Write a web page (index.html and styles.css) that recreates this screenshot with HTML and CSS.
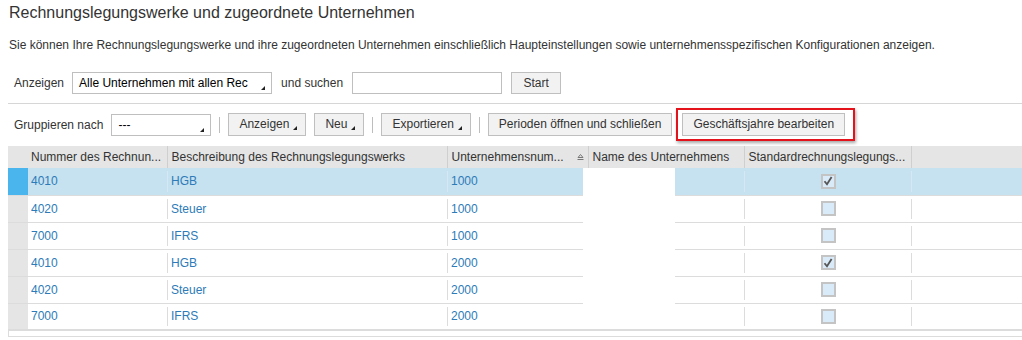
FILE: index.html
```html
<!DOCTYPE html>
<html lang="de">
<head>
<meta charset="utf-8">
<title>Rechnungslegungswerke</title>
<link rel="stylesheet" href="styles.css">
</head>
<body>
<div class="page">
  <h1 class="title">Rechnungslegungswerke und zugeordnete Unternehmen</h1>
  <p class="desc">Sie können Ihre Rechnungslegungswerke und ihre zugeordneten Unternehmen einschließlich Haupteinstellungen sowie unternehmensspezifischen Konfigurationen anzeigen.</p>

  <div class="filterbar">
    <span class="lbl">Anzeigen</span>
    <div class="select sel-wide"><span class="sel-text">Alle Unternehmen mit allen Rec</span><span class="corner"></span></div>
    <span class="lbl">und suchen</span>
    <div class="input"></div>
    <button class="btn btn-start">Start</button>
  </div>

  <div class="toolbar">
    <span class="lbl">Gruppieren nach</span>
    <div class="select sel-group"><span class="sel-text">---</span><span class="corner"></span></div>
    <span class="sep"></span>
    <button class="btn btn-menu">Anzeigen<span class="corner"></span></button>
    <button class="btn btn-menu">Neu<span class="corner"></span></button>
    <span class="sep"></span>
    <button class="btn btn-menu">Exportieren<span class="corner"></span></button>
    <span class="sep"></span>
    <button class="btn">Perioden öffnen und schließen</button>
    <button class="btn btn-marked">Geschäftsjahre bearbeiten</button>
  </div>

  <div class="grid">
    <table class="tbl">
      <colgroup>
        <col class="c-sel"><col class="c1"><col class="c2"><col class="c3"><col class="c4"><col class="c5"><col>
      </colgroup>
      <thead>
        <tr>
          <th class="selcell"></th>
          <th>Nummer des Rechnun...</th>
          <th>Beschreibung des Rechnungslegungswerks</th>
          <th class="sorted">Unternehmensnum...<svg class="sort" width="7" height="6" viewBox="0 0 7 6"><path d="M3.5 0.5 L6 3.5 H1 Z" fill="none" stroke="#777" stroke-width="1"/><path d="M0.5 5.5 H6.5" stroke="#777" stroke-width="1"/></svg></th>
          <th>Name des Unternehmens</th>
          <th>Standardrechnungslegungs...</th>
          <th></th>
        </tr>
      </thead>
      <tbody>
        <tr class="selected">
          <td class="selcell"></td><td>4010</td><td>HGB</td><td>1000</td><td></td>
          <td class="chk"><span class="box"><svg width="10" height="10" viewBox="0 0 10 10"><path d="M1.5 5.2 L4 8.3 L8.6 1" fill="none" stroke="#555" stroke-width="1.8"/></svg></span></td><td></td>
        </tr>
        <tr>
          <td class="selcell"></td><td>4020</td><td>Steuer</td><td>1000</td><td></td>
          <td class="chk"><span class="box"></span></td><td></td>
        </tr>
        <tr>
          <td class="selcell"></td><td>7000</td><td>IFRS</td><td>1000</td><td></td>
          <td class="chk"><span class="box"></span></td><td></td>
        </tr>
        <tr>
          <td class="selcell"></td><td>4010</td><td>HGB</td><td>2000</td><td></td>
          <td class="chk"><span class="box"><svg width="10" height="10" viewBox="0 0 10 10"><path d="M1.5 5.2 L4 8.3 L8.6 1" fill="none" stroke="#555" stroke-width="1.8"/></svg></span></td><td></td>
        </tr>
        <tr>
          <td class="selcell"></td><td>4020</td><td>Steuer</td><td>2000</td><td></td>
          <td class="chk"><span class="box"></span></td><td></td>
        </tr>
        <tr>
          <td class="selcell"></td><td>7000</td><td>IFRS</td><td>2000</td><td></td>
          <td class="chk"><span class="box"></span></td><td></td>
        </tr>
      </tbody>
    </table>
    <div class="blank"></div>
    <div class="grid-foot"></div>
  </div>
</div>
</body>
</html>
```

FILE: styles.css
```css
* { box-sizing: border-box; }
html, body { margin: 0; padding: 0; background: #fff; }
body {
  font-family: "Liberation Sans", Arial, sans-serif;
  font-size: 12px;
  color: #333;
}
.page { padding-left: 8px; }

.title {
  margin: 3px 0 0 1px;
  font-size: 16px;
  line-height: 20px;
  font-weight: normal;
  color: #333;
}
.desc {
  margin: 14px 0 0 1px;
  font-size: 12px;
  line-height: 16px;
  color: #333;
}

.filterbar {
  margin-top: 19px;
  display: flex;
  align-items: center;
  gap: 9px;
  padding: 0 0 9px 6px;
  border-bottom: 1px solid #d6d6d6;
}
.toolbar {
  margin-top: 9px;
  display: flex;
  align-items: center;
  gap: 8px;
  padding-left: 6px;
}
.lbl { color: #333; white-space: nowrap; line-height: 22px; }

.select {
  position: relative;
  height: 22px;
  border: 1px solid #bfbfbf;
  background: #fff;
  padding-left: 6px;
  line-height: 20px;
  color: #000;
  overflow: hidden;
  white-space: nowrap;
}
.sel-wide { width: 200px; margin-left: -1px; }
.sel-group { width: 100px; margin-left: 0; }
.select .corner { position: absolute; right: 6px; bottom: 3px; }

.corner {
  display: inline-block;
  width: 0; height: 0;
  border-left: 4px solid transparent;
  border-bottom: 4px solid #222;
}

.input {
  width: 150px;
  height: 22px;
  border: 1px solid #bfbfbf;
  background: #fff;
}

.btn {
  font-family: inherit;
  font-size: 12px;
  color: #333;
  height: 23px;
  border: 1px solid #bfbfbf;
  background: #f2f2f2;
  padding: 0 10px;
  margin: 0;
  line-height: 21px;
  white-space: nowrap;
}
.btn-start { height: 22px; width: 50px; padding: 0; }
.btn-menu { display: flex; align-items: center; gap: 4px; padding: 0 8px 0 10px; }
.btn-menu .corner { margin-top: 6px; }
.btn-marked { position: relative; margin-left: 2px; }
.btn-marked::after {
  content: "";
  position: absolute;
  left: -7px; right: -11px; top: -6px; bottom: -6px;
  border: 2px solid #e4121b;
  box-shadow: 1px 2px 3px rgba(0,0,0,0.35);
  pointer-events: none;
}

.sep { width: 1px; height: 16px; background: #bdbdbd; }

.grid { position: relative; margin-top: 10px; }
.tbl {
  width: 1014px;
  table-layout: fixed;
  border-collapse: collapse;
  font-size: 12px;
}
.c-sel { width: 20px; }
.c1 { width: 139px; }
.c2 { width: 280px; }
.c3 { width: 141px; }
.c4 { width: 156px; }
.c5 { width: 167px; }

.tbl th {
  height: 22px;
  background: #e5e5e5;
  font-weight: normal;
  color: #333;
  text-align: left;
  padding: 0 0 0 4px;
  border-left: 1px solid #cfcfcf;
  white-space: nowrap;
  overflow: hidden;
}
.tbl th:first-child, .tbl th:nth-child(2) { border-left: none; }
.tbl th.selcell { padding: 0; }
.tbl th:nth-child(2) { padding-left: 3px; }
.tbl th.sorted { position: relative; }
.sort { position: absolute; right: 4px; top: 8px; }

.tbl td {
  position: relative;
  height: 27px;
  padding: 0 0 0 4px;
  border-bottom: 1px solid #dcdcdc;
  color: #2d7bb8;
  white-space: nowrap;
}
.tbl td:nth-child(2) { padding-left: 3px; }
.tbl td:nth-child(n+3)::before {
  content: "";
  position: absolute;
  left: 0; top: 3px; bottom: 3px;
  width: 1px;
  background: #dcdcdc;
}
.tbl td.selcell { background: #e5e5e5; padding: 0; border-bottom-color: #dcdcdc; }
.tbl tr.selected td { background: #c6e1ef; }
.tbl tr.selected td::before { background: #d5e9f4; }
.tbl tr.selected td.selcell { background: #4ab4ec; }
.tbl tbody tr:last-child td { border-bottom: 2px solid #dcdcdc; }

.chk { text-align: center; padding: 0 !important; }
.box {
  display: inline-flex;
  align-items: center;
  justify-content: center;
  width: 15px; height: 15px;
  border: 2px solid #c4c4c4;
  background: #d9eaf8;
  vertical-align: middle;
  margin-left: 1px;
}
.box svg { display: block; }

.blank {
  position: absolute;
  left: 575px; top: 22px;
  width: 92px; height: 161px;
  background: #fff;
}
.grid-foot {
  height: 6px;
  border-left: 1px solid #dcdcdc;
  border-bottom: 1px solid #dcdcdc;
}
```
